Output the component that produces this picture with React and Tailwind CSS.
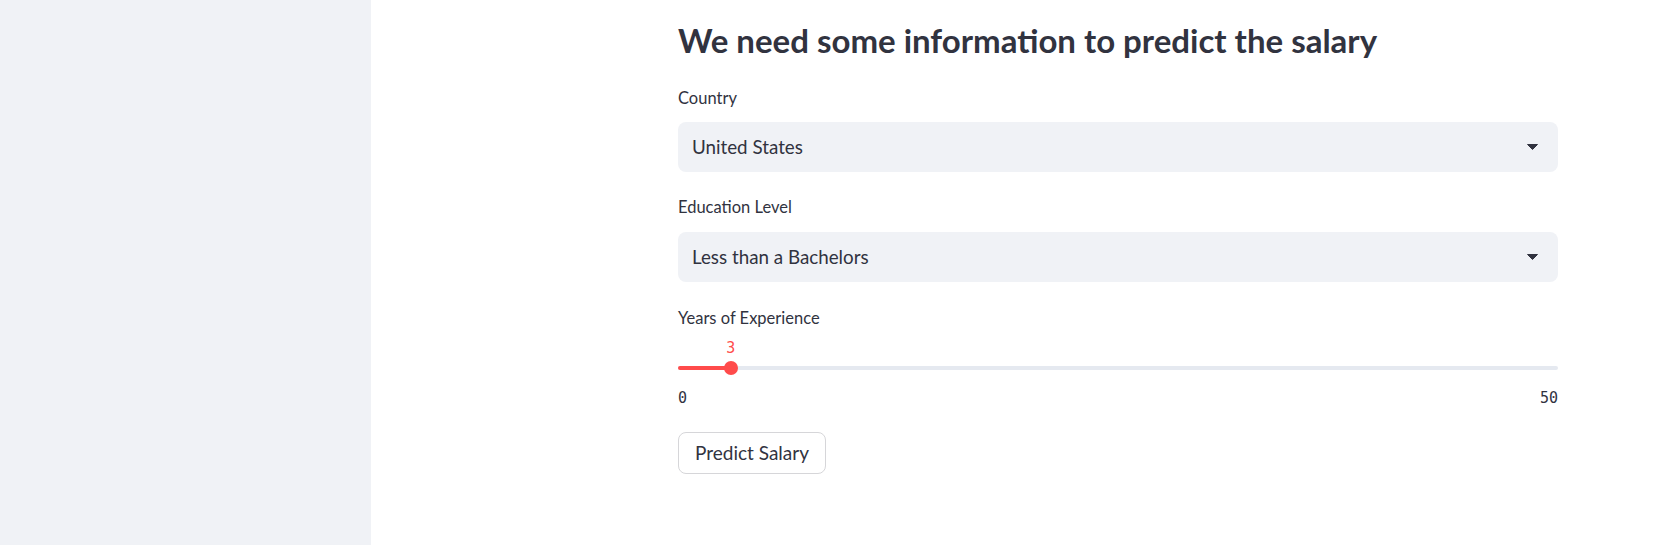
import React from "react";

function SelectBox({ value }) {
  return (
    <div className="flex items-center justify-between h-[50px] rounded-[8px] bg-[#f0f2f6] pl-[14px] pr-[20px]">
      <span className="text-[18.8px] leading-[24px] text-[#31333f]">{value}</span>
      <svg width="11" height="6" viewBox="0 0 11 6">
        <path d="M0.5 0.5h10L5.5 5.5z" fill="#31333f" stroke="#31333f" strokeLinejoin="round" />
      </svg>
    </div>
  );
}

function Label({ children, className = "" }) {
  return (
    <label className={"block text-[16.5px] leading-[22px] text-[#31333f] " + className}>{children}</label>
  );
}

export default function App() {
  return (
    <div className="flex h-[545px] bg-white font-['Lato',sans-serif] text-[#31333f]">
      <aside className="w-[371px] shrink-0 bg-[#f0f2f6]" />
      <main className="flex-1 pl-[307px] pt-[18px]">
        <div className="w-[880px]">
          <h2 className="text-[33px] leading-[44px] font-bold">
            We need some information to predict the salary
          </h2>

          <Label className="mt-[25px] mb-[13px]">Country</Label>
          <SelectBox value="United States" />

          <Label className="mt-[24px] mb-[14px]">Education Level</Label>
          <SelectBox value="Less than a Bachelors" />

          <Label className="mt-[25px]">Years of Experience</Label>
          <div className="relative mt-[37px] h-[4px] rounded-full bg-[#e5e9f0]">
            <div className="absolute left-0 top-0 h-[4px] w-[6%] rounded-full bg-[#ff4b4b]" />
            <div className="absolute left-[6%] top-1/2 w-[14px] h-[14px] -translate-x-1/2 -translate-y-1/2 rounded-full bg-[#ff4b4b]" />
            <div className="absolute left-[6%] -top-[28px] -translate-x-1/2 text-[15px] leading-[20px] text-[#ff4b4b] font-['DejaVu_Sans_Mono',monospace]">
              3
            </div>
          </div>
          <div className="flex justify-between mt-[18px] text-[15px] leading-[20px] text-[#31333f] font-['DejaVu_Sans_Mono',monospace]">
            <span>0</span>
            <span>50</span>
          </div>

          <button className="mt-[24px] h-[42px] w-[148px] rounded-[8px] border border-[#d6d6d9] bg-white text-[19px] leading-[24px] text-[#31333f]">
            Predict Salary
          </button>
        </div>
      </main>
    </div>
  );
}
